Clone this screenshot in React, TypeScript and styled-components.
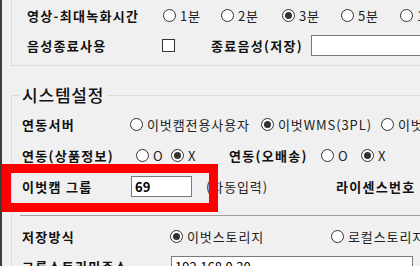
import React from 'react'
import styled, { createGlobalStyle } from 'styled-components'

const GlobalStyle = createGlobalStyle`
  html, body {
    margin: 0;
    padding: 0;
    background: #f0f0f0;
    overflow: hidden;
  }
  body {
    font-family: 'Noto Sans CJK KR', 'Noto Sans', sans-serif;
    color: #000;
  }
`

const Frame = styled.div`
  position: relative;
  width: 418px;
  height: 266px;
  border-left: 2px solid #3c3c3c;
  overflow: hidden;
`

const Inner = styled.div`
  padding-left: 9px;
  width: 460px;
`

const TopGroup = styled.div`
  border: 1px solid #dcdcdc;
  border-top: none;
  padding: 0 0 5px 15px;
`

const Group = styled.fieldset`
  margin: 19px 0 0 0;
  border: 1px solid #dcdcdc;
  padding: 4px 0 0 10px;
  min-width: 0;

  & > legend {
    font-size: 17px;
    font-weight: 500;
    line-height: 20px;
    padding: 0 3px;
    margin-left: -3px;
    color: #111;
    letter-spacing: 0.8px;
  }
`

const Row = styled.div<{ $h: number }>`
  display: flex;
  align-items: center;
  height: ${({ $h }) => $h}px;
  white-space: nowrap;
`

const Label = styled.div<{ $w?: number }>`
  flex: none;
  width: ${({ $w }) => ($w ? `${$w}px` : 'auto')};
  font-size: 13px;
  font-weight: 700;
  letter-spacing: 1.3px;
  color: #111;
`

const Text = styled.div<{ $w?: number }>`
  flex: none;
  width: ${({ $w }) => ($w ? `${$w}px` : 'auto')};
  font-size: 13px;
  color: #222;
  letter-spacing: 0.9px;
`

const OptionBox = styled.div<{ $w?: number }>`
  flex: none;
  display: flex;
  align-items: center;
  gap: 4px;
  width: ${({ $w }) => ($w ? `${$w}px` : 'auto')};
  font-size: 13px;
  color: #222;
  letter-spacing: 0.9px;
`

const Circle = styled.span<{ $on?: boolean }>`
  flex: none;
  box-sizing: border-box;
  width: 13px;
  height: 13px;
  border-radius: 50%;
  border: 1px solid #333;
  background: #fff;
  display: flex;
  align-items: center;
  justify-content: center;

  &::after {
    content: '';
    display: ${({ $on }) => ($on ? 'block' : 'none')};
    width: 7px;
    height: 7px;
    border-radius: 50%;
    background: #333;
  }
`

const Check = styled.span`
  flex: none;
  box-sizing: border-box;
  width: 13px;
  height: 13px;
  border: 1px solid #333;
  background: #fff;
`

const CheckCell = styled.div<{ $w: number }>`
  flex: none;
  width: ${({ $w }) => $w}px;
  display: flex;
  align-items: center;
`

const Field = styled.div<{ $w: number; $bold?: boolean }>`
  flex: none;
  box-sizing: border-box;
  width: ${({ $w }) => $w}px;
  height: 21px;
  border: 1px solid #7a7a7a;
  background: #fff;
  padding: 0 3px;
  font-size: 13px;
  line-height: 19px;
  font-weight: ${({ $bold }) => ($bold ? 700 : 400)};
  color: #000;
`

const Divider = styled.div`
  height: 1px;
  background: #a0a0a0;
  margin: 14px 0 5px -2px;
`

const Highlight = styled.div`
  position: absolute;
  left: 0;
  top: 164px;
  width: 216px;
  height: 48px;
  box-sizing: border-box;
  border: 9px solid #ff0000;
  pointer-events: none;
`

interface OptionProps {
  label: string
  on?: boolean
  w?: number
}

const Option = ({ label, on, w }: OptionProps) => (
  <OptionBox $w={w}>
    <Circle $on={on} />
    <span>{label}</span>
  </OptionBox>
)

const App = () => {
  return (
    <>
      <GlobalStyle />
      <Frame>
        <Inner>
          <TopGroup>
            <Row $h={30}>
              <Label $w={136}>영상-최대녹화시간</Label>
              <Option label="1분" w={58} />
              <Option label="2분" w={61} />
              <Option label="3분" on w={59} />
              <Option label="5분" w={59} />
              <Option label="10분" />
            </Row>
            <Row $h={30}>
              <Label $w={135}>음성종료사용</Label>
              <CheckCell $w={49}>
                <Check />
              </CheckCell>
              <Label $w={100}>종료음성(저장)</Label>
              <Field $w={160} />
            </Row>
          </TopGroup>

          <Group>
            <legend>시스템설정</legend>
            <Row $h={30}>
              <Label $w={108}>연동서버</Label>
              <Option label="이벗캠전용사용자" w={131} />
              <Option label="이벗WMS(3PL)" on w={120} />
              <Option label="이벗캠" />
            </Row>
            <Row $h={32}>
              <Label $w={114}>연동(상품정보)</Label>
              <Option label="O" w={35} />
              <Option label="X" on w={58} />
              <Label $w={92}>연동(오배송)</Label>
              <Option label="O" w={40} />
              <Option label="X" on />
            </Row>
            <Row $h={30}>
              <Label $w={109}>이벗캠 그룹</Label>
              <Field $w={61} $bold>69</Field>
              <Text $w={130} style={{ marginLeft: 14 }}>(자동입력)</Text>
              <Label>라이센스번호</Label>
            </Row>
            <Divider />
            <Row $h={30}>
              <Label $w={148}>저장방식</Label>
              <Option label="이벗스토리지" on w={161} />
              <Option label="로컬스토리지" />
            </Row>
            <Row $h={30}>
              <Label $w={149}>그룹스트리밍주소</Label>
              <Field $w={242}>192.168.0.30</Field>
            </Row>
          </Group>
        </Inner>
        <Highlight />
      </Frame>
    </>
  )
}

export default App
